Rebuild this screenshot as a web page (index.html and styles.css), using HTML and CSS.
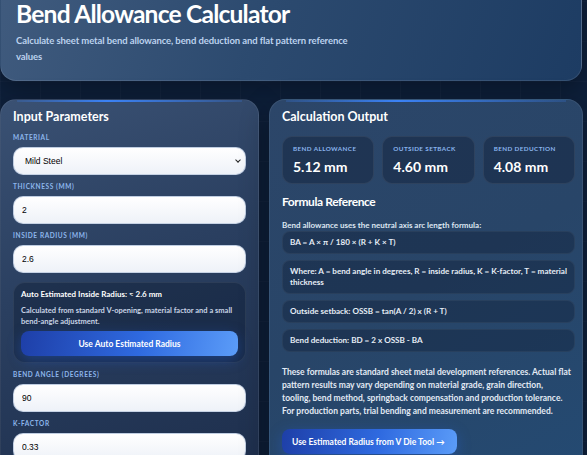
FILE: index.html
```html
<!DOCTYPE html>
<html>
<head>
    <title>Bend Allowance Calculator</title>
    <link rel="stylesheet" href="styles.css">
</head>
<body>
    <div class="page">
        <header class="hero">
            <h1>Bend Allowance Calculator</h1>
            <p>Calculate sheet metal bend allowance, bend deduction and flat pattern reference values</p>
        </header>

        <div class="layout">
            <section class="panel input-panel">
                <h2>Input Parameters</h2>

                <div class="field">
                    <label>Material</label>
                    <div class="select-wrap">
                        <select class="control">
                            <option>Mild Steel</option>
                            <option>Stainless Steel</option>
                            <option>Aluminium</option>
                        </select>
                    </div>
                </div>

                <div class="field">
                    <label>Thickness (mm)</label>
                    <input class="control" type="text" value="2">
                </div>

                <div class="field">
                    <label>Inside Radius (mm)</label>
                    <input class="control" type="text" value="2.6">
                </div>

                <div class="auto-box">
                    <div class="auto-title">Auto Estimated Inside Radius: ≈ 2.6 mm</div>
                    <p class="auto-note">Calculated from standard V-opening, material factor and a small bend-angle adjustment.</p>
                    <button class="btn btn-wide">Use Auto Estimated Radius</button>
                </div>

                <div class="field">
                    <label>Bend Angle (degrees)</label>
                    <input class="control" type="text" value="90">
                </div>

                <div class="field">
                    <label>K-Factor</label>
                    <input class="control" type="text" value="0.33">
                </div>
            </section>

            <section class="panel output-panel">
                <h2>Calculation Output</h2>

                <div class="stats">
                    <div class="stat">
                        <span class="stat-label">Bend Allowance</span>
                        <span class="stat-value">5.12 mm</span>
                    </div>
                    <div class="stat">
                        <span class="stat-label">Outside Setback</span>
                        <span class="stat-value">4.60 mm</span>
                    </div>
                    <div class="stat">
                        <span class="stat-label">Bend Deduction</span>
                        <span class="stat-value">4.08 mm</span>
                    </div>
                </div>

                <h3>Formula Reference</h3>
                <p class="intro">Bend allowance uses the neutral axis arc length formula:</p>

                <div class="formulas">
                    <div class="formula">BA = A × π / 180 × (R + K × T)</div>
                    <div class="formula">Where: A = bend angle in degrees, R = inside radius, K = K-factor, T = material thickness</div>
                    <div class="formula">Outside setback: OSSB = tan(A / 2) x (R + T)</div>
                    <div class="formula">Bend deduction: BD = 2 x OSSB - BA</div>
                </div>

                <p class="disclaimer">These formulas are standard sheet metal development references. Actual flat pattern results may vary depending on material grade, grain direction, tooling, bend method, springback compensation and production tolerance. For production parts, trial bending and measurement are recommended.</p>

                <button class="btn btn-link">Use Estimated Radius from V Die Tool →</button>
            </section>
        </div>
    </div>
</body>
</html>
```

FILE: styles.css
```css
* {
    margin: 0;
    padding: 0;
    box-sizing: border-box;
    font-family: 'Lato', 'Open Sans', sans-serif;
}

body {
    background-color: #0e203b;
    background-image:
        repeating-linear-gradient(90deg, rgba(255, 255, 255, 0.025) 0 1px, transparent 1px 40px),
        repeating-linear-gradient(0deg, rgba(255, 255, 255, 0.02) 0 1px, transparent 1px 40px);
    color: #fff;
    overflow: hidden;
}

.page {
    width: 583px;
    margin-top: -20px;
}

/* Header */
.hero {
    background: linear-gradient(110deg, #405b7e 0%, #2c4a6f 45%, #1d3c63 100%);
    border: 1px solid rgba(255, 255, 255, 0.1);
    border-radius: 16px;
    padding: 18px 15px 15px;
    width: 582px;
    box-shadow: 0 8px 24px rgba(0, 0, 0, 0.3);
}

.hero h1 {
    font-size: 24.6px;
    font-weight: 700;
    line-height: 30px;
    letter-spacing: -0.8px;
}

.hero p {
    margin-top: 4px;
    max-width: 340px;
    font-size: 9.5px;
    font-weight: 700;
    line-height: 16px;
    letter-spacing: -0.1px;
    color: #bcd2ee;
}

/* Panels */
.layout {
    display: grid;
    grid-template-columns: 259px 314px;
    gap: 10px;
    margin-top: 18px;
    align-items: start;
}

.panel {
    position: relative;
    border: 1px solid rgba(255, 255, 255, 0.08);
    border-radius: 16px;
    box-shadow: 0 10px 30px rgba(0, 0, 0, 0.3);
    overflow: hidden;
}

.panel::before {
    content: '';
    position: absolute;
    top: 0;
    left: 16px;
    right: 16px;
    height: 2px;
    background: linear-gradient(90deg, rgba(59, 130, 246, 0.2), #3b82f6 40%, rgba(59, 130, 246, 0.2));
}

.panel h2 {
    font-size: 12.5px;
    font-weight: 700;
    line-height: 18px;
}

.input-panel {
    background: linear-gradient(160deg, #3a5173 0%, #2a3f60 45%, #1d2e4c 100%);
    padding: 8px 12px 20px;
    display: flex;
    flex-direction: column;
    gap: 7px;
}

.field {
    display: flex;
    flex-direction: column;
    gap: 4px;
}

.field label {
    font-size: 6.5px;
    font-weight: 700;
    letter-spacing: 0.6px;
    text-transform: uppercase;
    color: #8db6ec;
    line-height: 10px;
}

.control {
    height: 28px;
    width: 100%;
    border: 1px solid rgba(160, 180, 210, 0.6);
    border-radius: 10px;
    background: linear-gradient(180deg, #ffffff, #eef2f8);
    padding: 0 8px;
    font-family: 'Liberation Sans', Arial, sans-serif;
    font-size: 8.5px;
    color: #000;
    outline: none;
}

.select-wrap {
    position: relative;
}

.select-wrap select {
    appearance: none;
    -webkit-appearance: none;
    padding: 0 11px;
}

/* small chevron like the native one */
.select-wrap::after {
    content: '';
    position: absolute;
    right: 6px;
    top: 11px;
    width: 3px;
    height: 3px;
    border-right: 1.2px solid #222;
    border-bottom: 1.2px solid #222;
    transform: rotate(45deg);
    pointer-events: none;
}

.auto-box {
    background: rgba(16, 30, 55, 0.45);
    border: 1px solid rgba(255, 255, 255, 0.07);
    border-radius: 12px;
    padding: 5px 7px 6px;
    margin-top: 2px;
}

.auto-title {
    font-size: 8px;
    font-weight: 700;
    line-height: 12px;
}

.auto-note {
    margin-top: 6px;
    font-size: 7.5px;
    font-weight: 700;
    line-height: 10.5px;
    color: #c9d5e6;
}

.btn {
    display: inline-block;
    height: 25px;
    padding: 0 10px;
    border: none;
    border-radius: 8px;
    background: linear-gradient(100deg, #1e3fa8 0%, #2f6ae0 55%, #5b9cf8 100%);
    color: #fff;
    font-size: 8.5px;
    font-weight: 700;
    box-shadow: 0 4px 14px rgba(37, 99, 235, 0.35);
    cursor: pointer;
}

.btn-wide {
    width: 100%;
    margin-top: 4px;
}

/* Output */
.output-panel {
    background: linear-gradient(150deg, #2c4669 0%, #284568 50%, #244a72 100%);
    padding: 8px 7px 20px 12px;
}

.stats {
    display: grid;
    grid-template-columns: repeat(3, 1fr);
    gap: 8px;
    margin-top: 10px;
}

.stat {
    background: rgba(20, 36, 62, 0.5);
    border: 1px solid rgba(255, 255, 255, 0.07);
    border-radius: 10px;
    padding: 7px 10px 7px;
    display: flex;
    flex-direction: column;
    gap: 4px;
}

.stat-label {
    font-size: 6.3px;
    font-weight: 700;
    letter-spacing: 0.4px;
    text-transform: uppercase;
    color: #8ab4ee;
    line-height: 10px;
}

.stat-value {
    font-size: 14px;
    font-weight: 700;
    line-height: 18px;
}

.output-panel h3 {
    margin-top: 9px;
    font-size: 12px;
    font-weight: 700;
    line-height: 18px;
    letter-spacing: -0.4px;
}

.intro {
    margin-top: 8px;
    font-size: 8px;
    font-weight: 700;
    line-height: 12px;
    color: #dde6f2;
}

.formulas {
    margin-top: 0;
    display: flex;
    flex-direction: column;
    gap: 6px;
}

.formula {
    background: rgba(16, 30, 55, 0.4);
    border: 1px solid rgba(255, 255, 255, 0.05);
    border-radius: 8px;
    padding: 5px 5px 5px 7px;
    font-size: 8.1px;
    font-weight: 700;
    line-height: 11px;
    color: #e6edf6;
}

.disclaimer {
    margin-top: 14px;
    padding-right: 2px;
    font-size: 8.5px;
    font-weight: 700;
    line-height: 13px;
    color: #e3eaf4;
}

.btn-link {
    margin-top: 11px;
    padding: 0 12px 0 10px;
}
```
